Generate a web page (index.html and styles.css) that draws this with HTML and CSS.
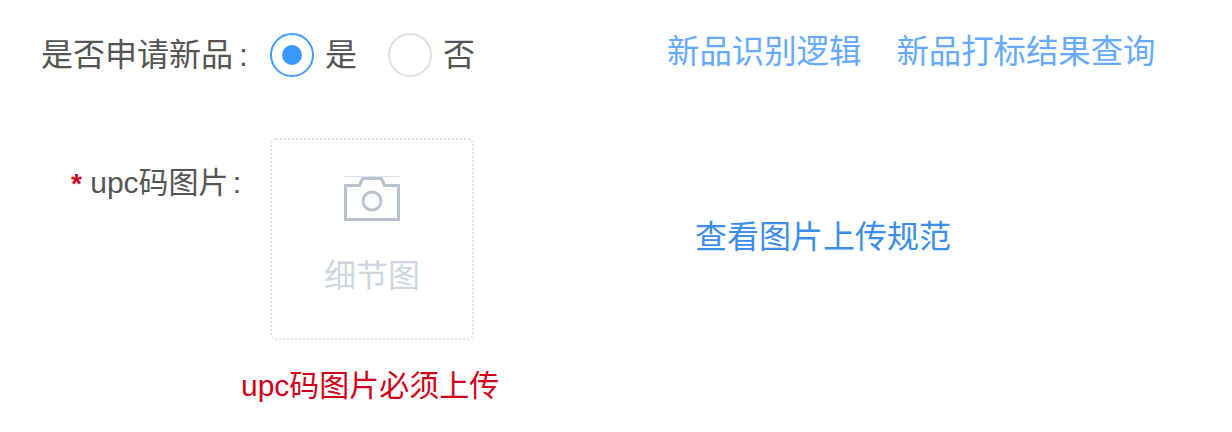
FILE: index.html
```html
<!DOCTYPE html>
<html lang="zh-CN">
<head>
<meta charset="utf-8">
<title>新品</title>
<link rel="stylesheet" href="styles.css">
</head>
<body>
<div class="page">
  <div class="row-top">
    <span class="top-label">是否申请新品<span class="colon colon-top">:</span></span>
    <span class="radio radio-on"><span class="radio-dot"></span></span>
    <span class="radio-text first">是</span>
    <span class="radio"></span>
    <span class="radio-text">否</span>
    <a class="link link-a">新品识别逻辑</a>
    <a class="link link-b">新品打标结果查询</a>
  </div>
  <div class="row-upload">
    <div class="field-label"><span class="star">*</span> upc码图片<span class="colon">:</span></div>
    <div class="upload-box">
      <svg class="camera" viewBox="0 0 56 46" width="56" height="46" aria-hidden="true">
        <path class="cam-thin" d="M0 .5H56"/>
        <path class="cam-body" d="M1.5 9.5H15.5L18.5 2.5H37.5L40.5 9.5H54.5V43.5H1.5Z"/>
        <circle class="cam-lens" cx="28" cy="25" r="9"/>
      </svg>
      <div class="upload-text">细节图</div>
    </div>
    <a class="spec-link">查看图片上传规范</a>
  </div>
  <div class="error">upc码图片必须上传</div>
</div>
</body>
</html>
```
FILE: styles.css
```css
* { box-sizing: border-box; }
html, body { margin: 0; padding: 0; background: #fff; }
body { font-family: "Liberation Sans", "Noto Sans CJK SC", sans-serif; width: 1232px; height: 432px; overflow: hidden; }
.page { padding: 33px 0 0 41px; }
.row-top { display: flex; align-items: center; height: 44px; color: #555; font-size: 32px; }
.top-label { width: 229px; font-size: 32px; line-height: 44px; white-space: nowrap; }
.colon { margin-left: 4px; }
.colon-top { margin-left: 6px; }
.radio { width: 44px; height: 44px; border: 2px solid #dcdfe6; border-radius: 50%; display: flex; align-items: center; justify-content: center; flex: none; }
.radio-on { border-color: #409eff; }
.radio-dot { width: 20px; height: 20px; border-radius: 50%; background: #3a97ff; }
.radio-text { margin-left: 11px; line-height: 44px; }
.radio-text.first { margin-right: 31px; }
.link { color: #66aaff; font-size: 32.4px; line-height: 34px; white-space: nowrap; margin-top: -6px; }
.link-a { margin-left: 192px; }
.link-b { margin-left: 35px; }
.row-upload { display: flex; align-items: flex-start; margin-top: 61px; }
.field-label { width: 229px; padding: 23px 0 0 30px; font-size: 30px; line-height: 44px; color: #555; white-space: nowrap; }
.star { color: #d0021b; font-weight: bold; font-size: 28px; }
.upload-box { width: 204px; height: 202px; border: 2px dotted #dfe3e9; border-radius: 6px; display: flex; flex-direction: column; align-items: center; padding-top: 36px; }
.camera { display: block; }
.cam-thin { stroke: #dfe3ea; stroke-width: 1; fill: none; }
.cam-body { stroke: #bcc3cf; stroke-width: 3; fill: none; }
.cam-lens { stroke: #bcc3cf; stroke-width: 3; fill: none; }
.upload-text { margin-top: 36px; font-size: 32px; line-height: 36px; color: #cfd6e0; }
.spec-link { margin: 80px 0 0 221px; font-size: 32px; line-height: 38px; color: #3d8ee8; white-space: nowrap; }
.error { margin: 26px 0 0 200px; font-size: 30px; line-height: 40px; color: #d0021b; white-space: nowrap; }
```
